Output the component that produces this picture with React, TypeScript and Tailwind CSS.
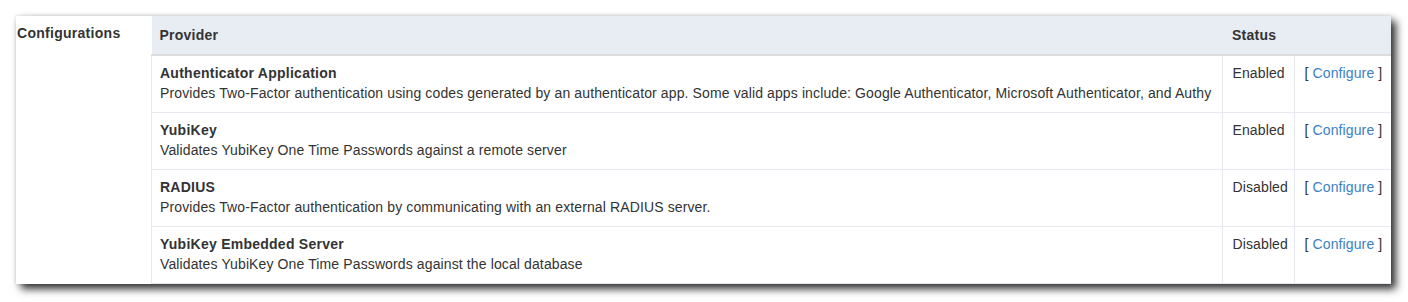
const PROVIDERS = [
  {
    name: 'Authenticator Application',
    desc: 'Provides Two-Factor authentication using codes generated by an authenticator app. Some valid apps include: Google Authenticator, Microsoft Authenticator, and Authy',
    status: 'Enabled',
  },
  { name: 'YubiKey', desc: 'Validates YubiKey One Time Passwords against a remote server', status: 'Enabled' },
  { name: 'RADIUS', desc: 'Provides Two-Factor authentication by communicating with an external RADIUS server.', status: 'Disabled' },
  { name: 'YubiKey Embedded Server', desc: 'Validates YubiKey One Time Passwords against the local database', status: 'Disabled' },
];

export default function App() {
  return (
    <div className="h-[302px] w-[1408px] bg-white pt-4 pl-4 font-['Liberation_Sans',Arial,sans-serif] text-[14px] leading-5 tracking-[0.12px] text-[#333]">
      <div className="flex w-[1375px] h-[268px] bg-white shadow-[5px_5px_8px_rgba(0,0,0,0.8),0_0_4px_rgba(0,0,0,0.15)]">
        <div className="w-[135px] shrink-0 pl-px pt-[7px] font-bold tracking-[0.28px]">Configurations</div>
        <table className="w-[1240px] table-fixed border-collapse self-start">
          <colgroup>
            <col />
            <col className="w-[72px]" />
            <col className="w-[96px]" />
          </colgroup>
          <thead>
            <tr className="h-[39px] bg-[#e8ecf3]">
              <th className="border-b-2 border-[#dcdcdc] px-2 text-left font-bold tracking-[0.25px]">Provider</th>
              <th colSpan={2} className="border-b-2 border-[#dcdcdc] px-[9px] text-left font-bold tracking-[0.25px]">Status</th>
            </tr>
          </thead>
          <tbody>
            {PROVIDERS.map((p) => (
              <tr key={p.name} className="h-[57px]">
                <td className="border border-t-0 border-[#e6e9ef] px-2 pt-[7px] pb-[9px] align-top">
                  <div className="font-bold tracking-[0.25px]">{p.name}</div>
                  <div className="whitespace-nowrap">{p.desc}</div>
                </td>
                <td className="border border-t-0 border-[#e6e9ef] pl-[9px] pr-1 pt-[7px] pb-[9px] align-top">{p.status}</td>
                <td className="border border-t-0 border-r-0 border-[#e6e9ef] pl-[9px] pr-1 pt-[7px] pb-[9px] align-top whitespace-nowrap">
                  [ <a className="text-[#3b7fc4]">Configure</a> ]
                </td>
              </tr>
            ))}
          </tbody>
        </table>
      </div>
    </div>
  );
}
